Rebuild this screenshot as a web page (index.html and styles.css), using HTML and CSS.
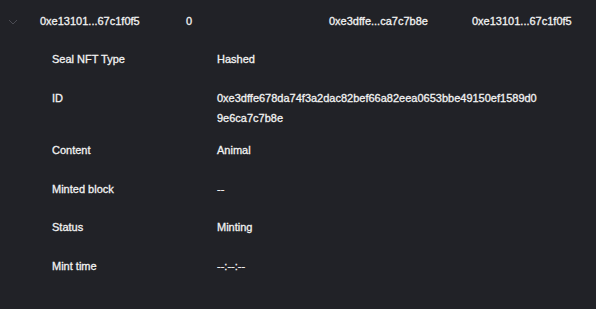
FILE: index.html
```html
<!DOCTYPE html>
<html lang="en">
<head>
    <meta charset="UTF-8">
    <meta name="viewport" content="width=device-width, initial-scale=1.0">
    <title>Seal NFT</title>
    <link rel="stylesheet" href="styles.css">
</head>
<body>
    <div class="record">
        <div class="record-head">
            <div class="toggle">
                <svg width="10" height="6" viewBox="0 0 10 6"><path d="M1 1 L5 5 L9 1" fill="none" stroke="#4a4b52" stroke-width="1"/></svg>
            </div>
            <div class="cell">0xe13101...67c1f0f5</div>
            <div class="cell">0</div>
            <div class="cell">0xe3dffe...ca7c7b8e</div>
            <div class="cell">0xe13101...67c1f0f5</div>
        </div>
        <div class="details">
            <div class="row">
                <div class="label">Seal NFT Type</div>
                <div class="value">Hashed</div>
            </div>
            <div class="row">
                <div class="label">ID</div>
                <div class="value hash">0xe3dffe678da74f3a2dac82bef66a82eea0653bbe49150ef1589d09e6ca7c7b8e</div>
            </div>
            <div class="row">
                <div class="label">Content</div>
                <div class="value">Animal</div>
            </div>
            <div class="row">
                <div class="label">Minted block</div>
                <div class="value">--</div>
            </div>
            <div class="row">
                <div class="label">Status</div>
                <div class="value">Minting</div>
            </div>
            <div class="row">
                <div class="label">Mint time</div>
                <div class="value">--:--:--</div>
            </div>
        </div>
    </div>
</body>
</html>
```

FILE: styles.css
```css
body {
    margin: 0;
    padding: 0;
    background: #212227;
    font-family: 'Liberation Sans', Arial, sans-serif;
    font-size: 11px;
    color: #f2f2f2;
    -webkit-text-stroke: 0.3px #f2f2f2;
}
.record {
    width: 596px;
}
.record-head {
    display: grid;
    grid-template-columns: 40px 146px 143px 143px 1fr;
    align-items: center;
    height: 42px;
    line-height: 20px;
}
.toggle {
    display: flex;
    align-items: center;
    padding-left: 8px;
    padding-top: 1px;
}
.toggle svg {
    display: block;
}
.details {
    padding: 7px 0 20px 52px;
}
.row {
    display: flex;
    align-items: flex-start;
    min-height: 26.8px;
    margin-bottom: 12px;
    line-height: 20px;
}
.label {
    width: 165px;
    flex-shrink: 0;
}
.value {
    width: 322px;
}
.hash {
    word-break: break-all;
}
```
